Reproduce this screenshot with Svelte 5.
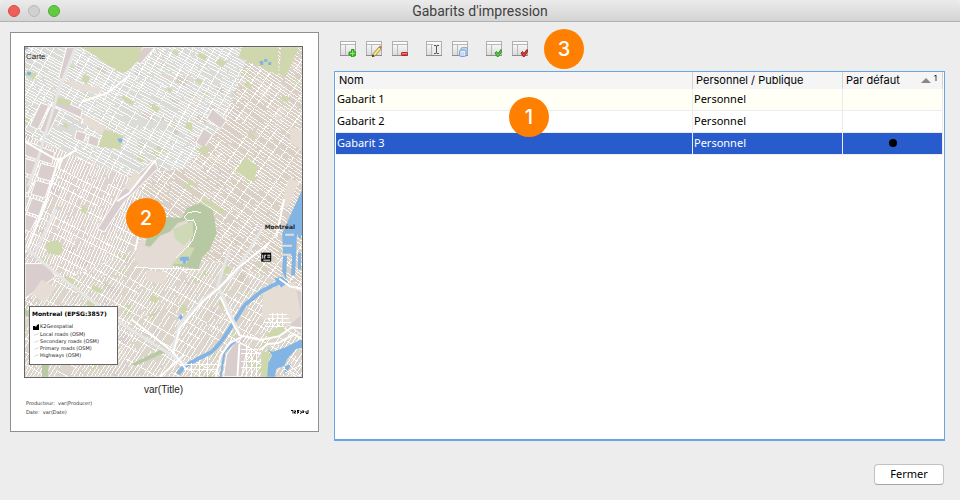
<script>
	let templates = $state([
		{ name: 'Gabarit 1', scope: 'Personnel', isDefault: false },
		{ name: 'Gabarit 2', scope: 'Personnel', isDefault: false },
		{ name: 'Gabarit 3', scope: 'Personnel', isDefault: true }
	]);
	let selected = $state(2);

	const groups = [
		[
			{ icon: 'add', label: 'Ajouter' },
			{ icon: 'edit', label: 'Modifier' },
			{ icon: 'remove', label: 'Supprimer' }
		],
		[
			{ icon: 'rename', label: 'Renommer' },
			{ icon: 'copy', label: 'Dupliquer' }
		],
		[
			{ icon: 'default', label: 'Définir par défaut' },
			{ icon: 'undefault', label: 'Retirer par défaut' }
		]
	];

	const layers = ['Local roads (OSM)', 'Secondary roads (OSM)', 'Primary roads (OSM)', 'Highways (OSM)'];

	// small seeded generator, so the map is the same on every load
	let seed = 41;
	function rnd() {
		seed = (seed * 16807) % 2147483647;
		return seed / 2147483647;
	}

	// parallel streets at an angle, broken into pieces of uneven length
	function streets(x, y, w, h, angle, step, keep) {
		const a = (angle * Math.PI) / 180;
		const dx = Math.cos(a);
		const dy = Math.sin(a);
		const r = Math.hypot(w, h) / 2;
		const cx = x + w / 2;
		const cy = y + h / 2;
		let d = '';
		for (let o = -r; o < r; o += step * (0.8 + rnd() * 0.4)) {
			let t = -r;
			while (t < r) {
				const len = 9 + rnd() * 28;
				if (rnd() < keep) {
					const x1 = cx + dx * t - dy * o;
					const y1 = cy + dy * t + dx * o;
					d += `M${x1.toFixed(1)} ${y1.toFixed(1)}l${(dx * len).toFixed(1)} ${(dy * len).toFixed(1)}`;
				}
				t += len + rnd() * 3;
			}
		}
		return d;
	}

	const zones = [
		{ id: 'north', points: '24,46 250,46 228,112 204,146 184,168 126,176 66,152 24,134', box: [24, 46, 226, 130], fill: '#dbdbd8', main: 29, cross: -59, step: 2.9 },
		{ id: 'east', points: '250,46 303,46 303,290 264,276 214,262 134,262 146,198 126,176 184,168 204,146 228,112', box: [126, 46, 177, 244], fill: '#dad0c6', main: 35, cross: -54, step: 3.2 },
		{ id: 'west', points: '24,134 66,152 126,176 146,198 134,250 60,282 24,250', box: [24, 134, 122, 148], fill: '#dcd4cd', main: -67, cross: 27, step: 3 },
		{ id: 'south', points: '24,250 60,282 134,250 178,262 214,262 264,276 303,290 303,378 24,378', box: [24, 250, 279, 128], fill: '#dcd5cc', main: -57, cross: 30, step: 3.5 }
	].map((z) => ({
		...z,
		major: streets(...z.box, z.main, z.step, 0.88),
		minor: streets(...z.box, z.cross, z.step * 3, 0.72)
	}));

	const blockColors = ['#d9cdcd', '#e2d9d0', '#cfd6b2', '#d5ccc2', '#dfd6d0'];
	const blocks = Array.from({ length: 260 }, (_, i) => ({
		x: 24 + rnd() * 276,
		y: 48 + rnd() * 326,
		w: 3 + rnd() * 8,
		h: 3 + rnd() * 5,
		fill: blockColors[i % 5]
	}));
</script>

{#snippet toolIcon(name)}
	<svg class="icon" viewBox="0 0 16 16" aria-hidden="true">
		<rect x="0.5" y="0.5" width="15" height="14" fill="url(#sheet)" stroke="#b0b0b0" />
		<path d="M1 1.5h14" stroke="#fff" />
		<path d="M1 3.5h14M5.5 4v10" stroke="#b9b9b9" />
		<path d="M0 14.5h16" stroke="#8d8d8d" />
		{#if name === 'add'}
			<path d="M11.500 8.500h2.500v2.500h2v3h-2v2h-2.500v-2H9v-3h2.500z" fill="#53c437" stroke="#2b9a1f" />
			<path d="M12.500 9.500v5.500M10 12.500h5" stroke="#8de26f" />
		{:else if name === 'edit'}
			<path d="M6.500 15.500l.800-3L13 6l2.200 2L9.500 14.500z" fill="#f0d767" stroke="#9a7f3d" stroke-width=".8" />
			<path d="M8.500 13.500L14 7" stroke="#fff5b4" />
			<path d="M12.800 6l1.400-1.500 1.800 1.800-1.200 1.500z" fill="#cf6a5c" />
			<path d="M6 16l.600-2.500 2 1.800z" fill="#222" />
		{:else if name === 'remove'}
			<rect x="9.500" y="11.500" width="6" height="3" rx=".6" fill="#df463d" stroke="#ad2929" />
			<path d="M10 12.500h5" stroke="#ef8076" />
		{:else if name === 'rename'}
			<rect x="7" y="3" width="8" height="11" fill="#ededed" />
			<path d="M8 4.500h2l.5.5.500-.5h2M10.500 5v7M8 12.500h2l.500-.5.500.5h2" fill="none" stroke="#555" />
		{:else if name === 'copy'}
			<rect x="9" y="6.500" width="6.500" height="6.500" rx="1.500" fill="#bcd4ee" stroke="#8badd4" />
			<rect x="7.500" y="9" width="6.500" height="6.500" rx="1.500" fill="#c7dcf3" stroke="#7fa4d0" />
			<path d="M9 10.500h3.500V14" fill="none" stroke="#e6f0fa" />
		{:else}
			<path
				d="M9 12l1.500-1.500L12 12.500 15 8.500l1 1.500-3.500 5.500h-1.500z"
				fill={name === 'default' ? '#58c73e' : '#dc3b37'}
				stroke={name === 'default' ? '#2f9825' : '#9c2525'}
			/>
		{/if}
	</svg>
{/snippet}

<svg class="defs" width="0" height="0" aria-hidden="true">
	<linearGradient id="sheet" x2="0" y2="1">
		<stop offset="0" stop-color="#fff" />
		<stop offset="1" stop-color="#dadada" />
	</linearGradient>
</svg>

<div class="window">
	<header class="titlebar">
		<div class="lights">
			<button class="light close" aria-label="Fermer la fenêtre"></button>
			<button class="light minimize" aria-label="Réduire" disabled></button>
			<button class="light zoom" aria-label="Agrandir"></button>
		</div>
		<h1>Gabarits d'impression</h1>
	</header>

	<main>
		<section class="sheet" aria-label="Carte">
			<div class="map">
				<svg viewBox="24 46 279 332" aria-hidden="true">
					<defs>
						{#each zones as zone}
							<clipPath id={zone.id}><polygon points={zone.points} /></clipPath>
						{/each}
					</defs>

					{#each zones as zone}
						<polygon points={zone.points} fill={zone.fill} />
					{/each}
					{#each blocks as b}
						<rect x={b.x} y={b.y} width={b.w} height={b.h} fill={b.fill} transform="rotate(28 {b.x} {b.y})" />
					{/each}

					<g class="roads">
						{#each zones as zone}
							<g clip-path="url(#{zone.id})">
								<path d={zone.major} />
								<path d={zone.minor} />
							</g>
						{/each}
					</g>

					<!-- industrial land -->
					<g class="industry">
						<path d="M66 46h10L63 80l-5-3zM53 96l29 13-2 8-28-13zM50 105l9 4-12 25-8-4zM40 102l8 3-11 24-8-4zM24 158l14 4-5 14-9-3zM40 163l15 4-5 14-14-4z" />
						<path d="M24 176l8 3-5 14-3-1zM35 180l14 4-5 14-14-4zM24 196l5 1-4 12h-1zM31 198l12 4-5 14-12-4zM24 214l12 4-7 14-5-2zM24 140l30 12-3 12-27-9z" />
						<path d="M76 130l10 3-3 9-9-4zM89 134l10 4-2 9-10-4zM153 160l5 8-34 34-20 30-7-3 25-39zM213 108l14 12-6 8-14-10zM204 128l9 6-9 14-8-6z" />
						<path d="M143 46h12l-15 17-5-3zM24 264h22l9 13-31 22zM286 284l17 8v44l-10-8-16-12zM236 342l12 6-6 30h-18l3-22z" />
					</g>
					<g fill="#e6ddd5">
						<path d="M135 171l8 6-12 14-8-4zM82 122l20 12 8-4-26-16zM264 292l32-10 6 34-14 12-8-10-18 2zM31 294l10-14 14 8-12 16z" />
						<path d="M291 126l12 4v20l-12-8zM146 271l22 2-4 12-18-4zM64 78l14 4 24 6-4 5-26-6zM290 178l10 4-12 26-6-3z" />
					</g>

					<!-- parks -->
					<g fill="#cfd7ad">
						<path d="M80 46h62l-3 13-13 12-4 1-16-9-12-9zM243 46h36v28l-40-18zM282 46h18l-14 31-6-4z" />
						<path d="M104 129l19 6-3 14-22-3zM246 156l12 10-3 16-19-11zM53 95l17 5-1 6-17-5zM123 95l11 6-2 4-11-7z" />
						<path d="M187 121l5 1 1 9-8-4zM204 144l6 5-5 6-7-5zM220 57l7 4-5 6-6-5zM199 51l9 4-3 5-7-4zM83 73l7 4-4 6-5-4z" />
						<path d="M27 69l9 4-3 6-9-5zM173 48l6 3-2 4-5-3zM197 77l6 3-2 3-6-3zM247 80l6 4-3 5-5-4zM203 197l22 13-2 5-21-13z" />
						<path d="M45 243l12-3 6 10-5 6-12-3zM82 206l6 3-3 5-5-3zM92 285l10 5-3 4-8-4zM65 276l8 4-4 5-7-4zM88 301l7 4-3 4-6-4z" />
						<path d="M224 265l8 4-4 6-6-4zM221 301l7 4-4 4-5-3zM152 295l8 4-4 5-6-3zM183 304l5 5-4 6-5-5zM266 336l16-10 6 6-14 8zM262 351l9 4-3 23h-6z" />
						<path d="M153 103l7 4-3 5-6-4zM283 95l7 3-3 4-6-3zM168 86l5 2-2 4-4-2zM249 132l7 4-2 3-6-4zM64 122l4 3-2 3-4-3z" />
					</g>
					<path d="M131 365l29-14 6 2-31 14zM41 366l7-2-1 14h-6zM24 310l5 2v7l-5-3z" fill="#b8caa4" />

					<!-- Mount Royal -->
					<path
						d="M141 238l9 4 16-20 24-3 6 16-4 16-16 14-10 5-26-1-6-11z"
						fill="#e4dbd5"
					/>
					<path
						d="M187 208l13-5 13 7 2 10 2 13-7 17-7 7-5 13-11-2-15-2 10-14 8-7 3-13-6-12-9 3-8 9-10 4-10 11-5-1 3-16 20-13 14 1z"
						fill="#b7c9a3"
					/>
					<path d="M173 229l20-8 0 15-9 10-9-7zM172 265l14-18 9 1-8 16z" fill="#d0d9b6" />
					<path class="lane" d="M201 213l-5-2-8 2-4 4 4 4 6-1 3 8-4 12-4 6-13 12M134 268l66 2" />

					<!-- water -->
					<g fill="#82b4e4">
						<path d="M303 190v44l-2 6-3-6-2 42h-4l1-20-5-2-1 26-4-8 1-18-1-20 8-18z" />
						<path d="M299 253h3v17h-3zM275 279l8-2 6 6-7 5z" />
						<path d="M303 340v9l-6 1-9 10-3 7-8 3-1 8h-8l1-14 4-8-5-6 5 3 14-5zM286 367l6-2-2 5-5 6zM182 257h7v4h-3v3h-3v-3h-3v-3zM181 315l2 3-2 3-3-3z" />
						<path d="M260 60h4v4h-3zM265 58h3v3h-3zM269 61h3v3h-3zM117 138h5v4h-3zM26 71h4v3h-4zM24 46h3v2h-3z" />
					</g>
					<path
						d="M285 280l-23 12-17 14-13 21-10 15-10 11-16 8-12 7-6 7"
						fill="none"
						stroke="#82b4e4"
						stroke-width="4"
					/>
					<path d="M236 342l-11 11-4 25" fill="none" stroke="#82b4e4" stroke-width="2" />
					<path d="M283 246h10M283 255h9M286 235h9" stroke="#e4ddd9" stroke-width="2" />

					<g class="highway grey">
						<path d="M24 247l18 16 29 23 56 42 60 38M75 46l-17 43-22 73-9 24M55 209l-20 42" />
						<path d="M265 225l-30 50-26 21-29 28-7 26M230 250l-12 36 22 49" />
					</g>
					<g class="highway">
						<path d="M24 141l31 18 6-1-3 10M76 149l-19 12-11 38-19 49M130 74l-23 18-26 9M155 160l-26 33-12 8" />
						<path d="M270 243l-32 26-19 20-17 14-22 26-7 26M160 378l24-22" />
						<path d="M221 298l10 22 9 16 22 5 18-4 13-9 10 1M303 340l-8-5-16 9-10 1-9 6M244 337l-14 7-9 13-5 21M280 279l11 8 12 2M285 199l-8 38" />
						<path d="M131 320l22 17 20 16 13 17M240 345l-2 33" />
					</g>
					<path
						class="grid"
						d="M270 315h18M268 319h22M264 323h28M267 327h18M273 314v14M278 314v14M283 314v14M242 350h16M242 355h20M182 366h36M242 363h20M184 371h34M242 369h20M247 345v33M252 349v29M257 352v26M192 364v14M200 361v17M208 358v20M285 370l12 8M290 365l12 12M286 374l16-8"
					/>
					<path d="M262 253h10v9h-10z" />
					<path d="M263.500 255v4M265 255.500h2M265.500 256v3M268 255.500h3M268 257.500h3M264 260.500h7" fill="none" stroke="#fff" />
				</svg>
				<span class="map-name">Carte</span>
				<span class="city">Montréal</span>

				<div class="legend">
					<strong>Montreal (EPSG:3857)</strong>
					<ul>
						<li>
							<svg viewBox="0 0 6 6" aria-hidden="true"><path d="M0 2h2l1 1 1-2 2-1v6H0z" /></svg>K2Geospatial
						</li>
						{#each layers as layer}
							<li>
								<svg viewBox="0 0 6 6" aria-hidden="true"><path class="swatch" d="M1 4l2-2 1 1 2-2" /></svg>{layer}
							</li>
						{/each}
					</ul>
				</div>
			</div>

			<h2>var(Title)</h2>
			<div class="credits">
				<div>
					<p>Producteur: &nbsp;var(Producer)</p>
					<p>Date: &nbsp;var(Date)</p>
				</div>
				<svg class="brand" viewBox="0 0 18 4" aria-hidden="true">
					<path
						d="M0 .5h2v3M3 1h2L3 3h2M6 .5h2L6 2h2L6 3.500M9 .5l2 2-2 1M12 0v3l1-2M14 2h2M17 0v3.500h-2"
						fill="none"
						stroke="#000"
					/>
				</svg>
			</div>
			<span class="badge preview-badge">2</span>
		</section>

		<section class="content">
			<div class="toolbar">
				{#each groups as group}
					<div class="group">
						{#each group as tool}
							<button class="tool" aria-label={tool.label}>{@render toolIcon(tool.icon)}</button>
						{/each}
					</div>
				{/each}
				<span class="badge">3</span>
			</div>

			<div class="list">
				<table>
					<colgroup>
						<col />
						<col class="scope-col" />
						<col class="default-col" />
					</colgroup>
					<thead>
						<tr>
							<th>Nom</th>
							<th>Personnel / Publique</th>
							<th>
								<div class="sorted">
									Par défaut
									<span class="order"><i class="arrow"></i><small>1</small></span>
								</div>
							</th>
						</tr>
					</thead>
					<tbody>
						{#each templates as template, i}
							<tr class:selected={selected === i} onclick={() => (selected = i)}>
								<td>{template.name}</td>
								<td>{template.scope}</td>
								<td>{#if template.isDefault}<i class="dot"></i>{/if}</td>
							</tr>
						{/each}
					</tbody>
				</table>
				<span class="badge list-badge">1</span>
			</div>
		</section>
	</main>

	<footer>
		<button class="done">Fermer</button>
	</footer>
</div>

<style>
	:global(body) {
		margin: 0;
		background: #ededed;
	}

	.window {
		display: flex;
		flex-direction: column;
		min-height: 100vh;
		box-sizing: border-box;
		background: #ededed;
		color: #000;
		font: 11px/14px 'Noto Sans', sans-serif;
	}

	button {
		padding: 0;
		border: 0;
		background: none;
		font: inherit;
		color: inherit;
	}

	.defs {
		position: absolute;
	}

	.titlebar {
		display: grid;
		grid-template-columns: 1fr auto 1fr;
		align-items: center;
		height: 21px;
		padding: 0 8px;
		border-bottom: 1px solid #b1b1b1;
		border-radius: 5px 5px 0 0;
		background: linear-gradient(#ebebeb, #d4d4d4);
	}

	.lights {
		display: flex;
		gap: 8px;
	}

	.light {
		width: 12px;
		height: 12px;
		box-sizing: border-box;
		border: 1px solid #d24c47;
		border-radius: 50%;
		background: #ed5f58;
	}

	.minimize {
		border-color: #b9b9b9;
		background: #d0d0d0;
	}

	.zoom {
		border-color: #4dae32;
		background: #62cb41;
	}

	h1 {
		margin: 0;
		color: #404040;
		font: 14px/20px Roboto, sans-serif;
	}

	main {
		display: flex;
		flex: 1;
		align-items: stretch;
		gap: 15px;
		padding: 0 15px 0 10px;
	}

	.sheet {
		position: relative;
		flex: 0 0 309px;
		align-self: flex-start;
		height: 400px;
		box-sizing: border-box;
		margin-top: 10px;
		padding: 13px 15px 0 13px;
		border: 1px solid #8f8f8f;
		background: #fff;
	}

	.map {
		position: relative;
		height: 332px;
		box-sizing: border-box;
		border: 1px solid #666;
	}

	.map > svg {
		display: block;
		width: 100%;
		height: 100%;
	}

	.roads path,
	.grid,
	.lane {
		fill: none;
		stroke: #fff;
		stroke-width: 1;
		shape-rendering: crispEdges;
	}

	.industry {
		fill: #d9cdcd;
		stroke: #fff;
		stroke-width: 1;
	}

	.highway {
		fill: none;
		stroke: #fff;
		stroke-width: 2;
	}

	.grey {
		stroke: #e6e6e6;
		stroke-width: 3;
	}

	.map-name {
		position: absolute;
		top: 3px;
		left: 1px;
		color: #222;
		font: 8px/14px 'Liberation Sans', sans-serif;
	}

	.city {
		position: absolute;
		top: 176px;
		right: 7px;
		color: #222;
		font: bold 6px/8px 'DejaVu Sans', sans-serif;
	}

	.legend {
		position: absolute;
		bottom: 12px;
		left: 4px;
		width: 89px;
		height: 59px;
		box-sizing: border-box;
		padding: 3px 2px;
		border: 1px solid #666;
		background: #fff;
		color: #222;
		font: 5px/7px 'DejaVu Sans', sans-serif;
	}

	.legend strong {
		display: block;
		color: #000;
		font-size: 6px;
		line-height: 8px;
		white-space: nowrap;
	}

	.legend ul {
		margin: 5px 0 0;
		padding: 0;
		list-style: none;
	}

	.legend li {
		display: flex;
		align-items: center;
		gap: 1px;
		padding-left: 1px;
		white-space: nowrap;
	}

	.legend li:first-child {
		margin-bottom: 1px;
	}

	.legend li svg {
		width: 6px;
		height: 6px;
	}

	.swatch {
		fill: none;
		stroke: #ddd;
	}

	h2 {
		margin: 6px 0 3px;
		color: #222;
		font: 10px/12px 'Liberation Sans', sans-serif;
		text-align: center;
	}

	.credits {
		display: flex;
		align-items: flex-end;
		justify-content: space-between;
		margin-right: -6px;
		padding-left: 2px;
		color: #333;
		font: 5px/9px 'DejaVu Sans', sans-serif;
	}

	.credits p {
		margin: 0;
	}

	.brand {
		width: 18px;
		height: 4px;
		margin-bottom: 3px;
	}

	.badge {
		display: flex;
		align-items: center;
		justify-content: center;
		width: 40px;
		height: 40px;
		border-radius: 50%;
		background: #ff8000;
		color: #fff;
		font: 500 20px/40px Inter, sans-serif;
	}

	.preview-badge {
		position: absolute;
		top: 165px;
		left: 115px;
	}

	.list-badge {
		position: absolute;
		top: 25px;
		left: 174px;
	}

	.content {
		display: flex;
		flex: 1;
		flex-direction: column;
		min-width: 0;
	}

	.toolbar {
		display: flex;
		align-items: center;
		gap: 18px;
		height: 49px;
		padding: 5px 0 0 6px;
		box-sizing: border-box;
	}

	.group {
		display: flex;
		gap: 10px;
	}

	.tool,
	.icon {
		display: block;
		width: 16px;
		height: 16px;
	}

	.toolbar .badge {
		margin-left: -2px;
	}

	.list {
		position: relative;
		flex: 1;
		padding: 0 1px;
		border: 1px solid #68a7e3;
		border-bottom-width: 2px;
		background: #fff;
	}

	table {
		width: 100%;
		border-collapse: separate;
		border-spacing: 0;
		table-layout: fixed;
	}

	.scope-col {
		width: 150px;
	}

	.default-col {
		width: 100px;
	}

	th,
	td {
		box-sizing: border-box;
		padding: 0 1px;
		border-right: 1px solid #ececec;
		text-align: left;
		white-space: nowrap;
	}

	th {
		height: 17px;
		padding: 0 3px 1px;
		border-right-color: #d4d4d4;
		background: #f5f5f5;
		font: 11px/16px Inter, sans-serif;
	}

	td {
		height: 22px;
		padding-bottom: 2px;
		border-bottom: 1px solid #ececec;
		line-height: 19px;
	}

	tbody tr:nth-child(odd) {
		background: #fffff5;
	}

	tbody tr.selected {
		background: #285ccd;
		color: #fff;
	}

	.sorted,
	.order {
		display: flex;
		justify-content: space-between;
	}

	.order {
		align-items: center;
		gap: 3px;
		margin-right: 2px;
	}

	.order small {
		font-size: 8px;
		line-height: 12px;
		align-self: flex-start;
	}

	.arrow {
		border: 5px solid transparent;
		border-top: 0;
		border-bottom-color: #888;
	}

	.dot {
		display: block;
		width: 8px;
		height: 8px;
		margin: 0 auto;
		border-radius: 50%;
		background: #000;
	}

	footer {
		display: flex;
		justify-content: flex-end;
		padding: 23px 16px 15px;
	}

	.done {
		width: 70px;
		height: 21px;
		box-sizing: border-box;
		padding-bottom: 1px;
		border: 1px solid #c2c2c2;
		border-bottom-color: #a5a5a5;
		border-radius: 4px;
		background: #fff;
	}
</style>
